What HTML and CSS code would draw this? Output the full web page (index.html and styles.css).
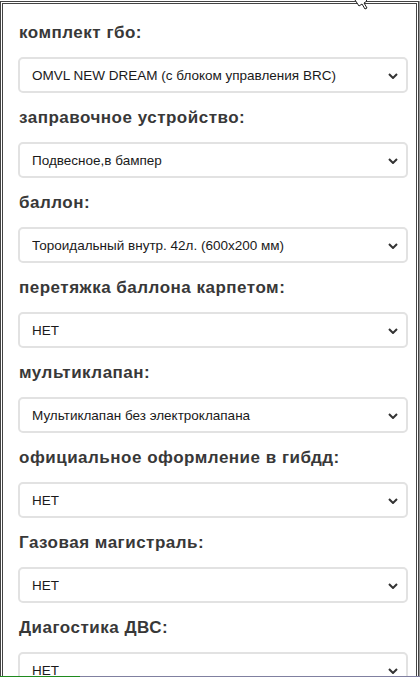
FILE: index.html
```html
<!DOCTYPE html>
<html>
<head>
    <title>Комплектация ГБО</title>
    <link rel="stylesheet" href="styles.css">
</head>
<body>
    <div class="frame">
        <form class="options">
            <div class="field">
                <label class="fieldLabel">комплект гбо:</label>
                <div class="selectWrap">
                    <select class="fieldSelect">
                        <option>OMVL NEW DREAM (с блоком управления BRC)</option>
                    </select>
                    <svg class="chevron" width="10" height="6" viewBox="0 0 10 6"><path d="M1 1 L5 5 L9 1" fill="none" stroke="#333" stroke-width="2"/></svg>
                </div>
            </div>
            <div class="field">
                <label class="fieldLabel">заправочное устройство:</label>
                <div class="selectWrap">
                    <select class="fieldSelect">
                        <option>Подвесное,в бампер</option>
                    </select>
                    <svg class="chevron" width="10" height="6" viewBox="0 0 10 6"><path d="M1 1 L5 5 L9 1" fill="none" stroke="#333" stroke-width="2"/></svg>
                </div>
            </div>
            <div class="field">
                <label class="fieldLabel">баллон:</label>
                <div class="selectWrap">
                    <select class="fieldSelect">
                        <option>Тороидальный внутр. 42л. (600x200 мм)</option>
                    </select>
                    <svg class="chevron" width="10" height="6" viewBox="0 0 10 6"><path d="M1 1 L5 5 L9 1" fill="none" stroke="#333" stroke-width="2"/></svg>
                </div>
            </div>
            <div class="field">
                <label class="fieldLabel">перетяжка баллона карпетом:</label>
                <div class="selectWrap">
                    <select class="fieldSelect">
                        <option>НЕТ</option>
                    </select>
                    <svg class="chevron" width="10" height="6" viewBox="0 0 10 6"><path d="M1 1 L5 5 L9 1" fill="none" stroke="#333" stroke-width="2"/></svg>
                </div>
            </div>
            <div class="field">
                <label class="fieldLabel">мультиклапан:</label>
                <div class="selectWrap">
                    <select class="fieldSelect">
                        <option>Мультиклапан без электроклапана</option>
                    </select>
                    <svg class="chevron" width="10" height="6" viewBox="0 0 10 6"><path d="M1 1 L5 5 L9 1" fill="none" stroke="#333" stroke-width="2"/></svg>
                </div>
            </div>
            <div class="field">
                <label class="fieldLabel">официальное оформление в гибдд:</label>
                <div class="selectWrap">
                    <select class="fieldSelect">
                        <option>НЕТ</option>
                    </select>
                    <svg class="chevron" width="10" height="6" viewBox="0 0 10 6"><path d="M1 1 L5 5 L9 1" fill="none" stroke="#333" stroke-width="2"/></svg>
                </div>
            </div>
            <div class="field">
                <label class="fieldLabel">Газовая магистраль:</label>
                <div class="selectWrap">
                    <select class="fieldSelect">
                        <option>НЕТ</option>
                    </select>
                    <svg class="chevron" width="10" height="6" viewBox="0 0 10 6"><path d="M1 1 L5 5 L9 1" fill="none" stroke="#333" stroke-width="2"/></svg>
                </div>
            </div>
            <div class="field">
                <label class="fieldLabel">Диагостика ДВС:</label>
                <div class="selectWrap">
                    <select class="fieldSelect">
                        <option>НЕТ</option>
                    </select>
                    <svg class="chevron" width="10" height="6" viewBox="0 0 10 6"><path d="M1 1 L5 5 L9 1" fill="none" stroke="#333" stroke-width="2"/></svg>
                </div>
            </div>
        </form>
    </div>

    <!-- mouse pointer caught in the shot -->
    <svg class="pointer" width="14" height="10" viewBox="0 0 14 10">
        <path d="M1 0 L5 6 L8 4 L11 9 L13 8 L10 3 L13 1 L12 0" fill="#fff" stroke="#222" stroke-width="1"/>
    </svg>
    <div class="taskLine"></div>
</body>
</html>
```

FILE: styles.css
```css
html, body {
    margin: 0;
    padding: 0;
    background-color: white;
    height: 100%;
    overflow: hidden;
}

body {
    padding-top: 1px;
    box-sizing: border-box;
    font-family: 'Liberation Sans', Arial, sans-serif;
}

.frame {
    width: 420px;
    height: 100%;
    box-sizing: border-box;
    border: 3px double #444;
    border-bottom: none;
    border-right-width: 3px;
    box-shadow: 1px 0 0 #999;
    width: 419px;
}

.options {
    padding: 19px 8px 0 15px;
}

.field {
    margin-bottom: 15px;
}

.fieldLabel {
    display: block;
    font-size: 17px;
    line-height: 20px;
    font-weight: bold;
    letter-spacing: 0.5px;
    color: #383838;
    margin-bottom: 14px;
    padding-left: 1px;
}

.selectWrap {
    position: relative;
}

.fieldSelect {
    display: block;
    width: 100%;
    height: 36px;
    box-sizing: border-box;
    appearance: none;
    -webkit-appearance: none;
    background-color: white;
    border: 2px solid #e2e2e2;
    border-radius: 5px;
    padding: 0 30px 0 12px;
    font-family: 'Liberation Sans', Arial, sans-serif;
    font-size: 13.5px;
    color: #1a1a1a;
    outline: none;
}

.chevron {
    position: absolute;
    right: 10px;
    top: 16px;
    pointer-events: none;
}

.pointer {
    position: absolute;
    left: 354px;
    top: 0;
}

.taskLine {
    position: fixed;
    left: 0;
    right: 0;
    bottom: 0;
    height: 1px;
    background: linear-gradient(to right, #1f8a1f 0, #1f8a1f 80px, #8080a0 80px);
}
```
